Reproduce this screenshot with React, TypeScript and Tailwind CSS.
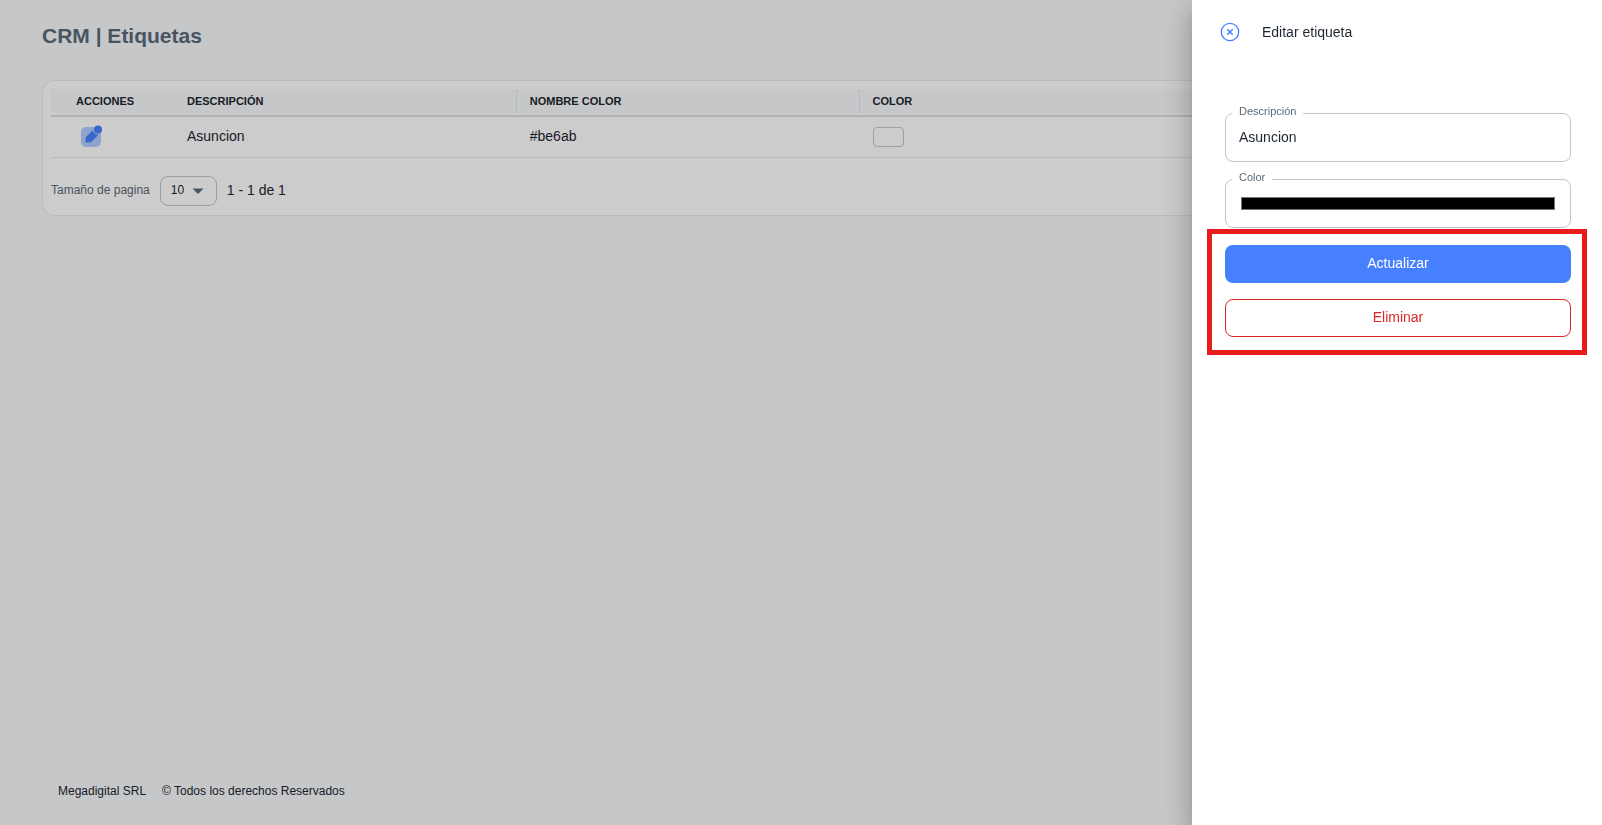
import React, { useState } from 'react';

const rows = [{ id: 1, descripcion: 'Asuncion', nombre: '#be6ab' }];

function EditIcon() {
  return (
    <svg width="22" height="22" viewBox="0 0 22 22" fill="#4680ff" aria-hidden="true">
      <rect x="1" y="2" width="20" height="20" rx="5" opacity="0.4" />
      <circle cx="18" cy="4.6" r="4" />
      <path
        d="M12.9 5.3Q13.8 9 18.2 10.1L11.8 16.5Q10.8 17.5 9.2 17.5H7Q5.5 17.5 5.5 16V13.9Q5.5 12.4 6.5 11.4Z"
      />
    </svg>
  );
}

function CloseIcon() {
  return (
    <svg width="20" height="20" viewBox="0 0 20 20" fill="none" stroke="#4680ff" aria-hidden="true">
      <circle cx="10" cy="10" r="8.7" strokeWidth="1.3" />
      <path d="m7.3 7.3 5.4 5.4M12.7 7.3l-5.4 5.4" strokeWidth="1.5" />
    </svg>
  );
}

function Field({ id, label, children }: { id: string; label: string; children: React.ReactNode }) {
  return (
    <fieldset className="h-[57px] rounded-lg border border-[#bec8d0] px-[6px]">
      <legend className="px-[7px] pb-1 text-[11px] leading-[12px] text-[#5b6b79]">
        <label htmlFor={id}>{label}</label>
      </legend>
      <div className="flex h-8 items-center px-[7px]">{children}</div>
    </fieldset>
  );
}

function HeadCell({ children, divider }: { children?: React.ReactNode; divider?: boolean }) {
  return (
    <th className="border-b-2 border-[#dbe0e5] p-0 pb-[2px] text-left">
      <div className={`flex h-6 items-center bg-[#f8f9fa] px-[13px] pt-[2px] text-[11px] font-bold ${divider ? 'border-r border-[#e7eaee]' : ''}`}>
        {children}
      </div>
    </th>
  );
}

function EtiquetasTable() {
  return (
    <table className="w-full table-fixed border-separate border-spacing-0">
      <colgroup>
        <col className="w-[123px]" />
        <col />
        <col />
        <col />
        <col />
      </colgroup>
      <thead>
        <tr>
          <th className="border-b-2 border-[#dbe0e5] p-0 pb-[2px] text-left">
            <div className="flex h-6 items-center bg-[#f8f9fa] pt-[2px] pl-[25px] text-[11px] font-bold">ACCIONES</div>
          </th>
          <HeadCell divider>DESCRIPCIÓN</HeadCell>
          <HeadCell divider>NOMBRE COLOR</HeadCell>
          <HeadCell>COLOR</HeadCell>
          <HeadCell />
        </tr>
      </thead>
      <tbody>
        {rows.map((row) => (
          <tr key={row.id} className="h-[41px] [&>td]:border-b [&>td]:border-[#e7eaee]">
            <td className="p-0 pb-[2px]">
              <button type="button" aria-label="Editar" className="ml-[29px] block cursor-pointer">
                <EditIcon />
              </button>
            </td>
            <td className="px-[13px] pb-[2px]">{row.descripcion}</td>
            <td className="px-[13px] pb-[2px]">{row.nombre}</td>
            <td className="p-0">
              <div className="ml-[13px] h-5 w-[31px] rounded border border-[#c8c8c8]" />
            </td>
            <td className="p-0" />
          </tr>
        ))}
      </tbody>
    </table>
  );
}

export default function App() {
  const [descripcion, setDescripcion] = useState('Asuncion');
  const [color, setColor] = useState('#000000');

  return (
    <div className="min-h-screen bg-[#f8f9fb] font-['Liberation_Sans',Arial,sans-serif] text-sm text-[#1d2630]">
      <div className="flex min-h-screen flex-col pt-6 pr-12 pb-6 pl-[42px]">
        <h1 className="text-[21px] leading-6 font-bold text-[#5b6b79]">CRM | Etiquetas</h1>

        <main className="mt-8 flex-1">
          <section className="rounded-xl border border-[#e7eaee] bg-white p-2">
            <EtiquetasTable />
            <div className="flex items-center gap-[10px] pt-[18px] pb-px">
              <label htmlFor="page-size" className="pb-[2px] text-xs text-[#5b6b79]">
                Tamaño de pagina
              </label>
              <div className="relative">
                <select
                  id="page-size"
                  defaultValue="10"
                  className="block h-[30px] w-[57px] appearance-none rounded-lg border border-[#bec8d0] pb-[2px] pl-[10px] text-xs"
                >
                  <option>10</option>
                  <option>25</option>
                  <option>50</option>
                </select>
                <svg className="pointer-events-none absolute top-3 right-[13px]" width="12" height="6" viewBox="0 0 12 6" fill="#5b6b79" aria-hidden="true">
                  <path d="M0.5 0.5h11L6 6z" />
                </svg>
              </div>
              <span className="pb-[2px]">1 - 1 de 1</span>
            </div>
          </section>
        </main>

        <footer className="flex gap-4 px-4 text-xs leading-5">
          <span>Megadigital SRL</span>
          <span>© Todos los derechos Reservados</span>
        </footer>
      </div>

      <div className="fixed inset-0 bg-black/20" />

      <aside className="fixed inset-y-0 right-0 w-[410px] bg-white pt-[22px] pr-[31px] pl-[33px] shadow-[0_8px_10px_-5px_rgba(0,0,0,0.2),0_16px_24px_2px_rgba(0,0,0,0.14),0_6px_30px_5px_rgba(0,0,0,0.12)]">
        <header className="-ml-[5px] flex h-5 items-center gap-[22px]">
          <button type="button" aria-label="Cerrar" className="cursor-pointer">
            <CloseIcon />
          </button>
          <h2>Editar etiqueta</h2>
        </header>

        <form className="mt-[63px] flex flex-col gap-[9px]" onSubmit={(e) => e.preventDefault()}>
          <Field id="descripcion" label="Descripción">
            <input
              id="descripcion"
              type="text"
              value={descripcion}
              onChange={(e) => setDescripcion(e.target.value)}
              className="w-full outline-none"
            />
          </Field>
          <Field id="color" label="Color">
            <input
              id="color"
              type="color"
              value={color}
              onChange={(e) => setColor(e.target.value)}
              className="mx-[2px] h-[13px] w-full appearance-none [&::-webkit-color-swatch]:border-[#767676] [&::-webkit-color-swatch-wrapper]:p-0"
            />
          </Field>

          <div className="relative mt-2 flex flex-col gap-4">
            <button type="submit" className="h-[38px] cursor-pointer rounded-lg bg-[#4680ff] pb-[2px] text-white">
              Actualizar
            </button>
            <button type="button" className="h-[38px] cursor-pointer rounded-lg border border-[#dc2626] pb-[2px] text-[#dc2626]">
              Eliminar
            </button>
            <div className="pointer-events-none absolute -top-4 -right-4 -bottom-[18px] -left-[18px] border-[5px] border-[#e81c1c]" />
          </div>
        </form>
      </aside>
    </div>
  );
}
